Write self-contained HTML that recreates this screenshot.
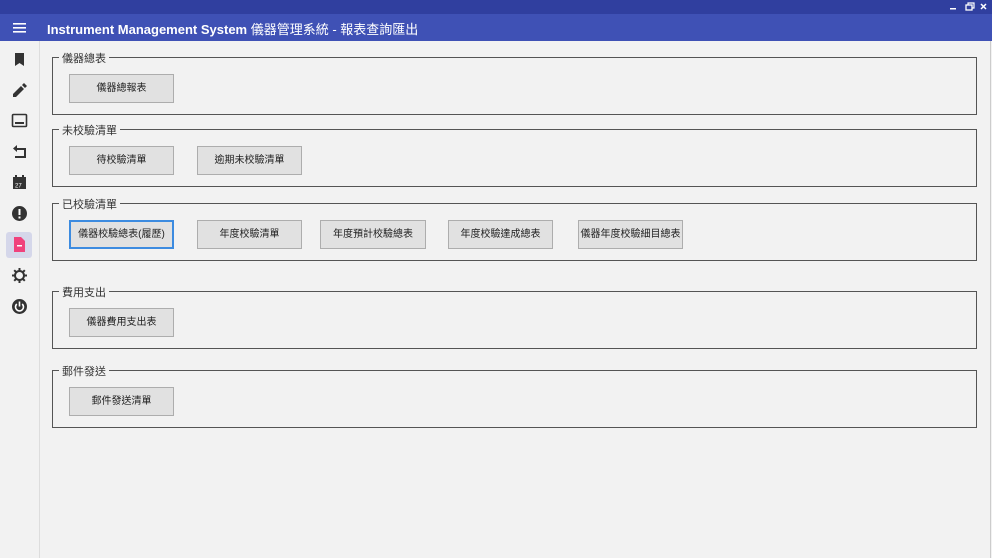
<!DOCTYPE html>
<html><head><meta charset="utf-8"><style>
*{margin:0;padding:0;box-sizing:border-box}
body{width:992px;height:558px;overflow:hidden;background:#f2f2f2;font-family:"Liberation Sans","Noto Sans CJK TC",sans-serif;position:relative}
.tb{position:absolute;left:0;top:0;width:992px;height:14px;background:#303f9f}
.hd{position:absolute;left:0;top:14px;width:992px;height:27px;background:#3f51b5;color:#fff}
.hd .t{position:absolute;left:47px;top:5px;font-size:13px;font-weight:bold;white-space:nowrap}
.hd .t span{font-weight:normal}
.side{position:absolute;left:0;top:41px;width:40px;height:517px;background:#f2f2f2;border-right:1px solid #ddd}
.ic{position:absolute;left:11px;width:17px;height:17px}
.sel{position:absolute;left:6px;top:191px;width:26px;height:26px;background:#d5d7ea;border-radius:3px}
fieldset{position:absolute;left:52px;width:925px;border:1px solid #555;}
.lg{position:absolute;left:6px;top:-8px;background:#f2f2f2;padding:0 3px;font-size:11px;color:#333}
.b{position:absolute;width:105px;height:29px;background:#e1e1e1;border:1px solid #adadad;font-size:10px;color:#222;text-align:center;line-height:28px}
.b.f{border:2px solid #3c8be0;line-height:26px}
.rb{position:absolute;right:1px;top:41px;width:1px;height:517px;background:#ccc}
</style></head><body>
<div class="tb"><svg style="position:absolute;left:950px;top:2px" width="40" height="10"><rect x="0" y="6" width="6" height="1.5" fill="#fff"/><rect x="16" y="3" width="6" height="5" fill="none" stroke="#fff" stroke-width="1.3"/><path d="M18 3V1h6v5h-2" fill="none" stroke="#fff" stroke-width="1.2"/><path d="M31 2l5 5M36 2l-5 5" stroke="#fff" stroke-width="1.5"/></svg></div>
<div class="hd"><svg style="position:absolute;left:13px;top:9px" width="13" height="10"><rect y="0" width="13" height="1.6" fill="#fff"/><rect y="4" width="13" height="1.6" fill="#fff"/><rect y="8" width="13" height="1.6" fill="#fff"/></svg>
<div class="t">Instrument Management System <span>儀器管理系統 - 報表查詢匯出</span></div></div>
<div class="side">
<svg class="ic" style="top:10px" viewBox="0 0 17 17"><path d="M4 2h9v13l-4.5-3L4 15z" fill="#333"/></svg>
<svg class="ic" style="top:41px" viewBox="0 0 17 17"><path d="M2 12l8-8 3 3-8 8H2z M11 3l2-2 3 3-2 2z" fill="#333"/></svg>
<svg class="ic" style="top:71px" viewBox="0 0 17 17"><rect x="1.5" y="2.5" width="14" height="12" rx="1" fill="none" stroke="#333" stroke-width="1.6"/><rect x="4" y="10" width="9" height="2" fill="#333"/></svg>
<svg class="ic" style="top:102px" viewBox="0 0 17 17"><path d="M6 2L2 5.5 6 9V7h7v6H4v2h11V5H6z" fill="#333"/></svg>
<svg class="ic" style="top:133px" viewBox="0 0 17 17"><rect x="2" y="3" width="13" height="12" fill="#333"/><rect x="4" y="1" width="2" height="3" fill="#333"/><rect x="11" y="1" width="2" height="3" fill="#333"/><text x="4" y="13.5" font-size="6" fill="#fff" font-family="Liberation Sans">27</text></svg>
<svg class="ic" style="top:164px" viewBox="0 0 17 17"><circle cx="8.5" cy="8.5" r="7.5" fill="#333"/><rect x="7.5" y="4" width="2" height="6" fill="#fff"/><rect x="7.5" y="11.5" width="2" height="2" fill="#fff"/></svg>
<div class="sel"></div>
<svg class="ic" style="top:195px" viewBox="0 0 17 17"><path d="M3 1h7l4 4v11H3z" fill="#f0427c"/><rect x="6" y="9" width="5" height="1.5" fill="#fff"/></svg>
<svg class="ic" style="top:226px" viewBox="0 0 17 17"><circle cx="8.5" cy="8.5" r="4.5" fill="none" stroke="#333" stroke-width="2"/><path d="M8.5 1v3M8.5 13v3M1 8.5h3M13 8.5h3M3.2 3.2l2 2M11.8 11.8l2 2M3.2 13.8l2-2M11.8 5.2l2-2" stroke="#333" stroke-width="2"/></svg>
<svg class="ic" style="top:257px" viewBox="0 0 17 17"><circle cx="8.5" cy="8.5" r="7.5" fill="#333"/><path d="M5.8 6a4 4 0 1 0 5.4 0" fill="none" stroke="#fff" stroke-width="1.6"/><rect x="7.7" y="3.5" width="1.6" height="5" fill="#fff"/></svg>
</div>
<div class="rb"></div>
<fieldset style="top:57px;height:58px"><div class="lg">儀器總表</div><div class="b" style="left:16px;top:16px">儀器總報表</div></fieldset>
<fieldset style="top:129px;height:58px"><div class="lg">未校驗清單</div><div class="b" style="left:16px;top:16px">待校驗清單</div><div class="b" style="left:144px;top:16px">逾期未校驗清單</div></fieldset>
<fieldset style="top:203px;height:58px"><div class="lg">已校驗清單</div><div class="b f" style="left:16px;top:16px">儀器校驗總表(履歷)</div><div class="b" style="left:144px;top:16px">年度校驗清單</div><div class="b" style="left:267px;top:16px;width:106px">年度預計校驗總表</div><div class="b" style="left:395px;top:16px">年度校驗達成總表</div><div class="b" style="left:525px;top:16px">儀器年度校驗細目總表</div></fieldset>
<fieldset style="top:291px;height:58px"><div class="lg">費用支出</div><div class="b" style="left:16px;top:16px">儀器費用支出表</div></fieldset>
<fieldset style="top:370px;height:58px"><div class="lg">郵件發送</div><div class="b" style="left:16px;top:16px">郵件發送清單</div></fieldset>
</body></html>
